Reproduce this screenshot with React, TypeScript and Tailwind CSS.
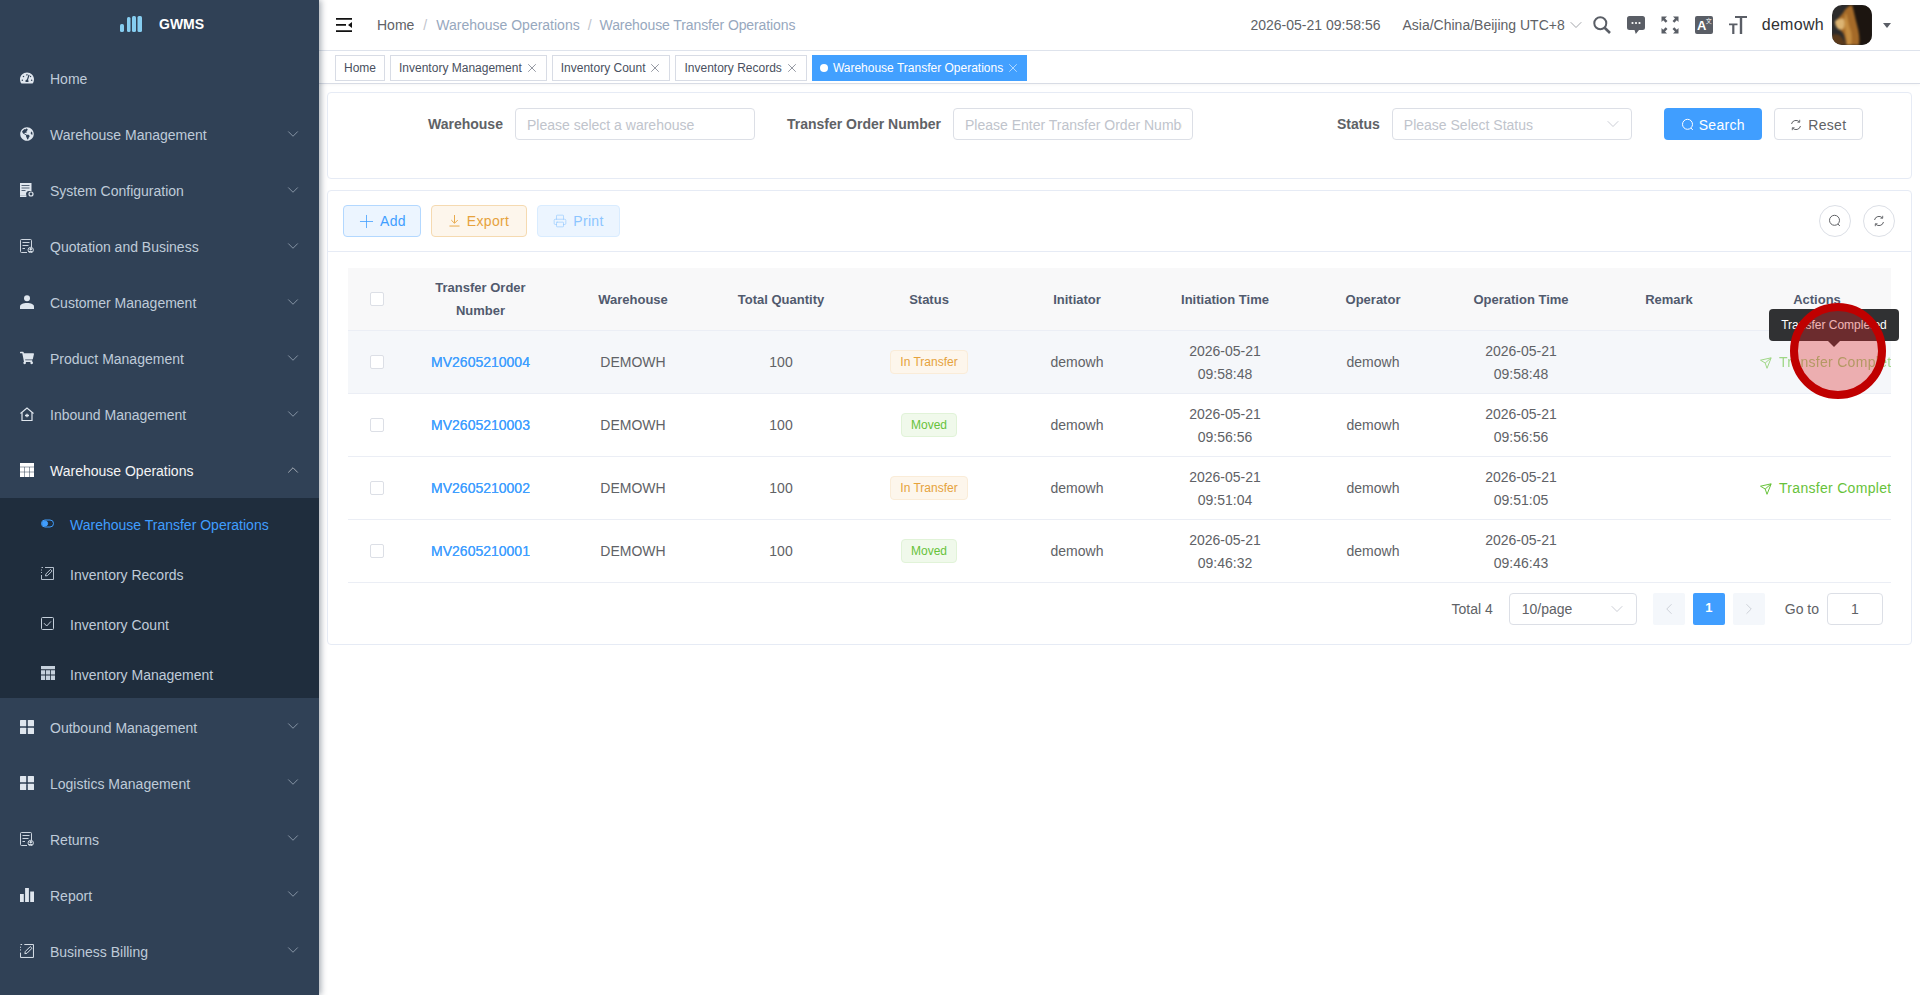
import { ChevronDown, ChevronUp, ChevronLeft, ChevronRight, X, Plus, Printer } from 'lucide-react'
import { FaTachometerAlt, FaGlobeAmericas, FaShoppingCart } from 'react-icons/fa'
import type { ReactNode } from 'react'

const DocGear = () => (
  <svg viewBox="0 0 14 14" className="w-[14px] h-[14px]" fill="currentColor">
    <path d="M0 0h11.500v8H9a3 3 0 0 0-2.800 4H0z" />
    <path d="M1.500 2.500h8M1.500 5h8M1.500 7.500h4" stroke="#304156" strokeWidth="0.800" fill="none" />
    <path d="M0 12.200h6.400v1.800H0z" />
    <circle cx="11" cy="11" r="2" fill="none" stroke="currentColor" strokeWidth="1.200" />
  </svg>
)
const DocUser = () => (
  <svg viewBox="0 0 14 14" className="w-[14px] h-[14px]" fill="none" stroke="currentColor" strokeWidth="0.900">
    <path d="M7 13.500H1.500a1 1 0 0 1-1-1v-11a1 1 0 0 1 1-1h9a1 1 0 0 1 1 1V8" />
    <path d="M2.500 3.500h7M2.500 6.500h6M2.500 9.500h2.500" />
    <circle cx="10.700" cy="11" r="2.700" />
    <circle cx="10.700" cy="10.200" r="0.900" fill="currentColor" />
    <path d="M9 12.500h3.400" />
  </svg>
)
const Person = () => (
  <svg viewBox="0 0 14 14" className="w-[14px] h-[14px]" fill="currentColor">
    <circle cx="7" cy="3.200" r="3" />
    <path d="M0 14v-2.400C0 9.200 3 8 7 8s7 1.200 7 3.600V14z" />
  </svg>
)
const HomePlus = () => (
  <svg viewBox="0 0 14 14" className="w-[14px] h-[14px]" fill="none" stroke="currentColor" strokeWidth="1.200">
    <path d="M0.500 6.500 7 1l6.500 5.500" />
    <path d="M2 5.500v8h10v-8" />
    <path d="M5 8.500h4M7 6.800v3.400" strokeWidth="1.300" />
  </svg>
)
const TableIcon = () => (
  <svg viewBox="0 0 14 14" className="w-[14px] h-[14px]" fill="currentColor">
    <path d="M0 0h14v3.800H0zM0 4.300h4.300v4.400H0zM4.800 4.300h4.400v4.400H4.800zM9.700 4.300H14v4.400H9.700zM0 9.200h4.300V14H0zM4.800 9.200h4.400V14H4.800zM9.700 9.200H14V14H9.700z" />
  </svg>
)
const Toggle = () => (
  <svg viewBox="0 0 13 13" className="w-[13px] h-[13px]" fill="none" stroke="currentColor" strokeWidth="1">
    <rect x="0.500" y="3" width="12" height="7" rx="3.500" />
    <circle cx="4" cy="6.500" r="2.600" fill="currentColor" />
  </svg>
)
const EditDoc = ({ size = 13 }: { size?: number }) => (
  <svg viewBox="0 0 13 13" width={size} height={size} fill="none" stroke="currentColor" strokeWidth="0.900">
    <path d="M4 .5h8.500v12H.5V8M.5 2.500v1M.5 5v1M.5.5H2" />
    <path d="M4.500 9l.4-2 4.600-4.600 1.600 1.600L6.500 8.600z" />
  </svg>
)
const CheckBoxIcon = () => (
  <svg viewBox="0 0 13 13" className="w-[13px] h-[13px]" fill="none" stroke="currentColor" strokeWidth="1">
    <rect x="0.500" y="0.500" width="12" height="12" rx="1" />
    <path d="M3 6.200 5.700 9l4.300-4.600" />
  </svg>
)
const Grid9 = () => (
  <svg viewBox="0 0 14 14" className="w-[14px] h-[14px]" fill="currentColor">
    <path d="M0 0h14v3.200H0zM0 4.200h4.200v4.300H0zM5 4.200h4v4.300H5zM9.800 4.200H14v4.300H9.800zM0 9.500h4.200V14H0zM5 9.500h4V14H5zM9.800 9.500H14V14H9.800z" />
  </svg>
)
const Squares = () => (
  <svg viewBox="0 0 14 14" className="w-[14px] h-[14px]" fill="currentColor">
    <rect width="6.200" height="6.200" rx="0.500" />
    <rect x="7.800" width="6.200" height="6.200" rx="0.500" />
    <rect y="7.800" width="6.200" height="6.200" rx="0.500" />
    <rect x="7.800" y="7.800" width="6.200" height="6.200" rx="0.500" />
  </svg>
)
const Bars = () => (
  <svg viewBox="0 0 14 14" className="w-[14px] h-[14px]" fill="currentColor">
    <path d="M0 6h3.800v8H0zM5.100 0h3.800v14H5.100zM10.200 3.500H14V14h-3.800z" />
  </svg>
)

// element-ui style line icons
const LineSearch = ({ size = 14 }: { size?: number }) => (
  <svg viewBox="0 0 14 14" width={size} height={size} fill="none" stroke="currentColor" strokeWidth="1">
    <circle cx="6.500" cy="6.300" r="5" />
    <path d="M10 10l1.800 2" />
  </svg>
)
const LineRefresh = ({ size = 12 }: { size?: number }) => (
  <svg viewBox="0 0 12 12" width={size} height={size} fill="none" stroke="currentColor" strokeWidth="1">
    <path d="M1.500 5a4.600 4.600 0 0 1 8-2" />
    <path d="M10.500 7a4.600 4.600 0 0 1-8 2" />
    <path d="M9.700 .8v2.400H7.400M2.300 11.200V8.800h2.300" strokeWidth="0.900" />
  </svg>
)
const LineDownload = () => (
  <svg viewBox="0 0 12 13" className="w-[11px] h-3" fill="none" stroke="currentColor" strokeWidth="1">
    <path d="M6 0v8.500M2.500 5.500 6 9l3.500-3.500M.5 12h11" />
  </svg>
)
const Promotion = () => (
  <svg viewBox="0 0 12 12" className="w-3 h-3 mr-[7px] shrink-0" fill="none" stroke="currentColor" strokeWidth="1">
    <path d="M.5 3.200 11.200.8 7 11.300 5.200 6z" />
    <path d="M5.200 6 11 1" />
  </svg>
)

type MenuItem = { label: string; icon: ReactNode; open?: boolean; bright?: boolean; noArrow?: boolean }

const topMenu: MenuItem[] = [
  { label: 'Home', icon: <FaTachometerAlt size={14} />, noArrow: true },
  { label: 'Warehouse Management', icon: <FaGlobeAmericas size={14} /> },
  { label: 'System Configuration', icon: <DocGear /> },
  { label: 'Quotation and Business', icon: <DocUser /> },
  { label: 'Customer Management', icon: <Person /> },
  { label: 'Product Management', icon: <FaShoppingCart size={14} /> },
  { label: 'Inbound Management', icon: <HomePlus /> },
  { label: 'Warehouse Operations', icon: <TableIcon />, open: true, bright: true },
]
const subMenu = [
  { label: 'Warehouse Transfer Operations', icon: <Toggle />, active: true },
  { label: 'Inventory Records', icon: <EditDoc /> },
  { label: 'Inventory Count', icon: <CheckBoxIcon /> },
  { label: 'Inventory Management', icon: <Grid9 /> },
]
const bottomMenu: MenuItem[] = [
  { label: 'Outbound Management', icon: <Squares /> },
  { label: 'Logistics Management', icon: <Squares /> },
  { label: 'Returns', icon: <DocUser /> },
  { label: 'Report', icon: <Bars /> },
  { label: 'Business Billing', icon: <EditDoc size={14} /> },
]

const rows = [
  { no: 'MV2605210004', status: 'In Transfer', t1: '09:58:48', t2: '09:58:48', hover: true },
  { no: 'MV2605210003', status: 'Moved', t1: '09:56:56', t2: '09:56:56' },
  { no: 'MV2605210002', status: 'In Transfer', t1: '09:51:04', t2: '09:51:05' },
  { no: 'MV2605210001', status: 'Moved', t1: '09:46:32', t2: '09:46:43' },
]

function MenuRow({ item, low }: { item: MenuItem; low?: boolean }) {
  return (
    <div className={`h-14 flex items-center pl-5 pr-[17px] ${low ? 'pt-[3px]' : 'pt-[2px]'} ${item.bright ? 'text-[#f4f4f5]' : 'text-[#bfcbd9]'}`}>
      <span className={`w-[30px] shrink-0 -mt-[2px] ${item.bright ? 'text-white' : 'text-[#dfe6ee]'}`}>{item.icon}</span>
      <span className="flex-1 text-sm">{item.label}</span>
      {!item.noArrow && (item.open
        ? <ChevronUp size={18} strokeWidth={0.800} className="-mt-[3px]" />
        : <ChevronDown size={18} strokeWidth={0.800} className="-mt-[3px]" />)}
    </div>
  )
}

function Sidebar() {
  return (
    <aside className="w-[319px] shrink-0 bg-[#304156] h-full relative z-10 shadow-[2px_0_6px_rgba(0,21,41,0.35)]">
      <div className="h-[50px] flex items-center pl-[120px] -translate-y-[1px]">
        <svg viewBox="0 0 22 16" className="w-[22px] h-4 mr-[17px]" fill="#86cdf0">
          <rect x="0" y="8" width="4" height="8" rx="1.600" />
          <rect x="7" y="1" width="3.500" height="15" rx="1.500" />
          <rect x="12" y="0" width="4" height="16" rx="1.500" />
          <rect x="17.500" y="0" width="4.500" height="16" rx="1.500" />
        </svg>
        <span className="text-sm font-bold text-white">GWMS</span>
      </div>
      {topMenu.map(m => <MenuRow key={m.label} item={m} />)}
      <div className="bg-[#1f2d3d]">
        {subMenu.map(s => (
          <div key={s.label} className={`h-[50px] flex items-center pl-[41px] pt-[3px] text-sm ${s.active ? 'text-[#409eff]' : 'text-[#bfcbd9]'}`}>
            <span className={`w-[29px] shrink-0 -mt-[3px] ${s.active ? 'text-[#409eff]' : 'text-[#c5d0dc]'}`}>{s.icon}</span>
            {s.label}
          </div>
        ))}
      </div>
      {bottomMenu.map(m => <MenuRow key={m.label} item={m} low />)}
    </aside>
  )
}

function Navbar() {
  return (
    <div className="h-[51px] border-b border-[#dfe4ed] flex items-center text-sm text-[#5a5e66] shrink-0">
      <svg viewBox="0 0 16 14" className="w-4 h-[14px] ml-[17px] mr-[25px]" fill="#111">
        <path d="M0 0h16v1.700H0zM0 6h10v1.700H0zM0 12.200h16v1.700H0zM16 4v6l-4-3z" />
      </svg>
      <span className="text-[#606266]">Home</span>
      <span className="text-[#c0c4cc] mx-[9px]">/</span>
      <span className="text-[#97a8be]">Warehouse Operations</span>
      <span className="text-[#c0c4cc] mx-[8px]">/</span>
      <span className="text-[#97a8be] tracking-[-0.1px]">Warehouse Transfer Operations</span>
      <div className="ml-auto flex items-center">
        <span className="text-[#606266]">2026-05-21 09:58:56</span>
        <span className="text-[#606266] ml-[22px]">Asia/China/Beijing UTC+8</span>
        <ChevronDown size={20} strokeWidth={1} className="ml-[1px] text-[#909399]" />
        <svg viewBox="0 0 18 18" className="w-[18px] h-[18px] ml-[7px]" fill="none" stroke="#5a5e66" strokeWidth="2">
          <circle cx="7.300" cy="7.300" r="6" />
          <path d="M11.600 11.800 17 17" strokeWidth="2.600" />
        </svg>
        <svg viewBox="0 0 18 18" className="w-[18px] h-[18px] ml-4" fill="#5a5e66">
          <path d="M2.500 0h13A2.500 2.500 0 0 1 18 2.500v9a2.500 2.500 0 0 1-2.500 2.500H12l-3.200 4L7.500 14h-5A2.500 2.500 0 0 1 0 11.500v-9A2.500 2.500 0 0 1 2.500 0z" />
          <circle cx="5.500" cy="7" r="1.100" fill="#fff" />
          <circle cx="9" cy="7" r="1.100" fill="#fff" />
          <circle cx="12.500" cy="7" r="1.100" fill="#fff" />
        </svg>
        <svg viewBox="0 0 18 18" className="w-[18px] h-[18px] ml-4" fill="#5a5e66">
          <path d="M.500 .500h5.500L4 2.500l2.500 2.500-1.800 1.800L2.200 4.300 .500 6zM17.500 .500V6l-1.700-1.700-2.500 2.500-1.800-1.800L14 2.500 12 .500zM.500 17.500V12l1.700 1.700 2.500-2.500 1.800 1.800L4 15.500l2 2zM17.500 17.500H12l2-2-2.500-2.500 1.800-1.800 2.500 2.500 1.700-1.700z" />
        </svg>
        <span className="w-[18px] h-[18px] ml-4 bg-[#5a5e66] rounded-[2px] flex items-start justify-center text-white relative">
          <span className="text-[13px] leading-[20px] font-bold mr-[4px]">A</span>
          <span className="absolute right-[1px] top-[1px] text-[6px] leading-[7px] font-['Noto_Sans_CJK_SC',sans-serif]">文</span>
        </span>
        <svg viewBox="0 0 18 18" className="w-[18px] h-[18px] ml-4" fill="#5a5e66">
          <path d="M6 0h12v2h-4.800v16h-2.400V2H6zM0 7.500h8.500v1.800H5.400V18H3.200V9.300H0z" />
        </svg>
        <span className="text-base text-[#303133] ml-[15px] tracking-[0.3px]">demowh</span>
        <svg viewBox="0 0 40 40" className="w-10 h-10 rounded-[10px] ml-2">
          <rect width="40" height="40" fill="#2c2b2b" />
          <g className="blur-[1px]">
            <path d="M0 30c6-2 10 0 14 10H0z" fill="#5a3a1b" />
            <path d="M16 0h24v40H20z" fill="#1c1510" />
            <path d="M20 0c-4 1-7 4-9 8-2 3-6 6-8 9 1 3 1 5 4 7 2 2 4 3 5 6 1 4 2 7 2 10h13c1-6 0-13-2-20-2-7-3-14-5-20z" fill="#a56a28" />
            <path d="M3 16c3-2 6-3 9-2 1 3 1 6 0 9-1 2-4 2-6 1-2-2-3-5-3-8z" fill="#dcb472" />
            <path d="M14 8c2 6 3 14 5 18 1 5 1 9 0 14h-4c0-6-2-10-2-18 0-5-1-10 1-14z" fill="#c48c40" />
          </g>
        </svg>
        <span className="w-0 h-0 ml-[11px] mr-[29px] border-x-[4px] border-x-transparent border-t-[5px] border-t-[#5a5e66]" />
      </div>
    </div>
  )
}

function TagsBar() {
  const tags = ['Home', 'Inventory Management', 'Inventory Count', 'Inventory Records']
  return (
    <div className="h-[33px] border-b border-[#d8dce5] flex items-start pt-1 shrink-0 pl-[16px] gap-[5px] text-xs text-[#495060] shadow-[0_1px_3px_rgba(0,0,0,0.04)]">
      {tags.map((t, i) => (
        <span key={t} className="h-[26px] flex items-center border border-[#d8dce5] px-2 bg-white">
          {t}
          {i > 0 && <X size={14} strokeWidth={1} className="ml-[3px] -mr-[1px]" />}
        </span>
      ))}
      <span className="h-[26px] flex items-center bg-[#42a0ff] text-white px-2">
        <span className="w-2 h-2 rounded-full bg-white mr-[5px]" />
        Warehouse Transfer Operations
        <X size={14} strokeWidth={1} className="ml-[3px] -mr-[1px]" />
      </span>
    </div>
  )
}

function Field({ label, placeholder, select }: { label: string; placeholder: string; select?: boolean }) {
  return (
    <div className="flex items-center">
      <span className="text-sm font-bold text-[#606266] mr-3">{label}</span>
      <div className={`w-[240px] h-8 border border-[#dcdfe6] rounded-[4px] flex items-center pl-[11px] overflow-hidden ${select ? 'pr-2' : 'pr-[10px]'}`}>
        <span className="text-sm text-[#c0c4cc] whitespace-nowrap flex-1 overflow-hidden pt-[1px]">{placeholder}</span>
        {select && <ChevronDown size={20} strokeWidth={1} className="text-[#c0c4cc]" />}
      </div>
    </div>
  )
}

function StatusTag({ status }: { status: string }) {
  const moved = status === 'Moved'
  return (
    <span className={`inline-flex items-center h-6 px-[9px] rounded-[4px] text-xs border -translate-y-[1px] ${moved
      ? 'bg-[#f0f9eb] border-[#e1f3d8] text-[#67c23a]'
      : 'bg-[#fdf6ec] border-[#faecd8] text-[#e6a23c]'}`}>{status}</span>
  )
}

function DataTable() {
  const heads = ['Warehouse', 'Total Quantity', 'Status', 'Initiator', 'Initiation Time', 'Operator', 'Operation Time', 'Remark', 'Actions']
  return (
    <table className="table-fixed w-[1543px] ml-5 mt-4 border-collapse">
      <thead>
        <tr className="h-[62px] bg-[#f8f8f9] border-b border-[#ebeef5] text-[13px] text-[#515a6e] text-center leading-[23px] [&>th]:pt-[1px]">
          <th className="w-[52px] font-bold"><span className="block w-[14px] h-[14px] ml-[22px] border border-[#dcdfe6] rounded-[2px] bg-white" /></th>
          <th className="w-[159px] font-bold pl-[22px] pr-[20px]">Transfer Order<br />Number</th>
          {heads.map(h => <th key={h} className="w-[148px] font-bold">{h}</th>)}
        </tr>
      </thead>
      <tbody>
        {rows.map(r => (
          <tr key={r.no} className={`h-[63px] border-b border-[#ebeef5] text-sm text-[#606266] text-center leading-[23px] [&>td]:pt-[2px] ${r.hover ? 'bg-[#f5f7fa]' : ''}`}>
            <td><span className="block w-[14px] h-[14px] ml-[22px] -mt-[2px] border border-[#dcdfe6] rounded-[2px] bg-white" /></td>
            <td className="text-[#409eff] pl-[2px] [text-shadow:0_0_0.4px_#409eff]">{r.no}</td>
            <td>DEMOWH</td>
            <td>100</td>
            <td><StatusTag status={r.status} /></td>
            <td>demowh</td>
            <td>2026-05-21<br />{r.t1}</td>
            <td>demowh</td>
            <td>2026-05-21<br />{r.t2}</td>
            <td />
            <td className="overflow-hidden whitespace-nowrap text-left pl-[17px]">
              {r.status === 'In Transfer' && (
                <span className={`inline-flex items-center text-[#67c23a] tracking-[0.3px] translate-y-[1px] ${r.hover ? 'opacity-60' : ''}`}>
                  <Promotion />
                  Transfer Completed
                </span>
              )}
            </td>
          </tr>
        ))}
      </tbody>
    </table>
  )
}

function Pagination() {
  return (
    <div className="flex items-center justify-end h-[52px] pr-[28px] text-sm text-[#606266]">
      <span>Total 4</span>
      <div className="w-[128px] h-8 ml-4 border border-[#dcdfe6] rounded-[4px] flex items-center pl-3 pr-[9px]">
        <span className="flex-1">10/page</span>
        <ChevronDown size={20} strokeWidth={1} className="text-[#c0c4cc]" />
      </div>
      <span className="w-8 h-8 ml-4 bg-[#f4f7fb] rounded-[2px] flex items-center justify-center text-[#c0c4cc]"><ChevronLeft size={18} strokeWidth={1} /></span>
      <span className="w-8 h-8 ml-2 bg-[#409eff] rounded-[2px] flex items-center justify-center text-white font-bold text-[13px]">1</span>
      <span className="w-8 h-8 ml-2 bg-[#f4f7fb] rounded-[2px] flex items-center justify-center text-[#c0c4cc]"><ChevronRight size={18} strokeWidth={1} /></span>
      <span className="ml-5">Go to</span>
      <span className="w-[56px] h-8 ml-2 border border-[#dcdfe6] rounded-[4px] flex items-center justify-center">1</span>
    </div>
  )
}

export default function App() {
  return (
    <div className="h-screen flex overflow-hidden bg-white font-['Liberation_Sans',Arial,sans-serif]">
      <Sidebar />
      <div className="flex-1 min-w-0 flex flex-col relative">
        <Navbar />
        <TagsBar />
        <div className="pl-2 pr-2 pt-2">
          {/* search card */}
          <div className="h-[87px] border border-[#e6ebf5] rounded-[4px] pt-[15px] flex items-start pl-[100px]">
            <Field label="Warehouse" placeholder="Please select a warehouse" />
            <div className="ml-8"><Field label="Transfer Order Number" placeholder="Please Enter Transfer Order Number" /></div>
            <div className="ml-[144px]"><Field label="Status" placeholder="Please Select Status" select /></div>
            <button className="ml-8 h-8 w-[98px] rounded-[4px] bg-[#409eff] text-white text-sm tracking-[0.3px] flex items-center justify-center gap-[4px] pt-[1px]">
              <LineSearch /> Search
            </button>
            <button className="ml-3 h-8 w-[89px] rounded-[4px] border border-[#dcdfe6] text-[#606266] text-sm tracking-[0.3px] flex items-center justify-center gap-[6px] pt-[1px]">
              <LineRefresh /> Reset
            </button>
          </div>
          {/* table card */}
          <div className="h-[455px] mt-[11px] border border-[#e6ebf5] rounded-[4px]">
            <div className="h-[61px] border-b border-[#e6ebf5] flex items-center pl-[15px] pr-[16px] text-sm tracking-[0.3px]">
              <button className="h-8 w-[78px] rounded-[4px] border border-[#b3d8ff] bg-[#ecf5ff] text-[#409eff] flex items-center justify-center gap-[3px]">
                <Plus size={21} strokeWidth={0.900} className="-ml-[2px]" /> Add
              </button>
              <button className="h-8 w-[96px] ml-[10px] rounded-[4px] border border-[#f5dab1] bg-[#fdf6ec] text-[#e6a23c] flex items-center justify-center gap-[7px]">
                <LineDownload /> Export
              </button>
              <button className="h-8 w-[83px] ml-[10px] rounded-[4px] border border-[#d9ecff] bg-[#ecf5ff] text-[#8cc5ff] flex items-center justify-center gap-[6px]">
                <Printer size={14} strokeWidth={1} /> Print
              </button>
              <span className="ml-auto w-8 h-8 rounded-full border border-[#dcdfe6] flex items-center justify-center text-[#606266]"><LineSearch /></span>
              <span className="ml-3 w-8 h-8 rounded-full border border-[#dcdfe6] flex items-center justify-center text-[#606266]"><LineRefresh /></span>
            </div>
            <DataTable />
            <Pagination />
          </div>
        </div>
        {/* tooltip */}
        <div className="absolute left-[1450px] top-[309px] w-[130px] h-8 rounded-[4px] bg-[#303133] text-white text-xs flex items-center justify-center">
          Transfer Completed
          <span className="absolute left-[59px] top-8 w-0 h-0 border-x-[6px] border-x-transparent border-t-[6px] border-t-[#303133]" />
        </div>
        {/* click marker */}
        <div className="absolute left-[1471px] top-[303px] w-[96px] h-[96px] rounded-full border-[8px] border-[#c00000] bg-[#dc2626]/35" />
      </div>
    </div>
  )
}
